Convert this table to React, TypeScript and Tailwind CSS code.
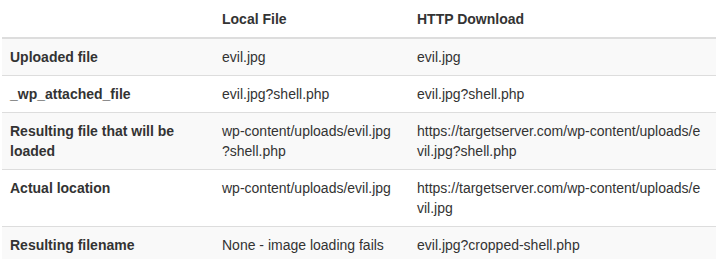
const rows = [
  { label: ['Uploaded file'], local: ['evil.jpg'], http: ['evil.jpg'] },
  { label: ['_wp_attached_file'], local: ['evil.jpg?shell.php'], http: ['evil.jpg?shell.php'] },
  {
    label: ['Resulting file that will be', 'loaded'],
    local: ['wp-content/uploads/evil.jpg', '?shell.php'],
    http: ['https://targetserver.com/wp-content/uploads/e', 'vil.jpg?shell.php'],
  },
  {
    label: ['Actual location'],
    local: ['wp-content/uploads/evil.jpg'],
    http: ['https://targetserver.com/wp-content/uploads/e', 'vil.jpg'],
  },
  { label: ['Resulting filename'], local: ['None - image loading fails'], http: ['evil.jpg?cropped-shell.php'] },
]

function Lines({ lines }: { lines: string[] }) {
  return (
    <>
      {lines.map((l) => (
        <span key={l} className="block whitespace-nowrap">
          {l}
        </span>
      ))}
    </>
  )
}

export default function App() {
  return (
    <div className="bg-white w-[719px] h-[259px] overflow-hidden font-['Liberation_Sans',Arial,sans-serif] text-[14px] leading-5 text-[#333]">
      <table className="mt-px ml-0.5 w-[714px] table-fixed border-collapse">
        <colgroup>
          <col className="w-[212px]" />
          <col className="w-[195px]" />
          <col />
        </colgroup>
        <thead>
          <tr>
            <th className="px-2 py-2 text-left align-bottom font-bold border-b-2 border-[#ddd]" />
            <th className="px-2 py-2 text-left align-bottom font-bold border-b-2 border-[#ddd]">Local File</th>
            <th className="px-2 py-2 text-left align-bottom font-bold border-b-2 border-[#ddd]">HTTP Download</th>
          </tr>
        </thead>
        <tbody>
          {rows.map((r, i) => (
            <tr key={r.label[0]} className={i % 2 === 0 ? 'bg-[#f9f9f9]' : 'bg-white'}>
              <td className="p-2 align-top font-bold border-t border-[#ddd]">
                <Lines lines={r.label} />
              </td>
              <td className="p-2 align-top border-t border-[#ddd]">
                <Lines lines={r.local} />
              </td>
              <td className="p-2 align-top border-t border-[#ddd]">
                <Lines lines={r.http} />
              </td>
            </tr>
          ))}
        </tbody>
      </table>
    </div>
  )
}
